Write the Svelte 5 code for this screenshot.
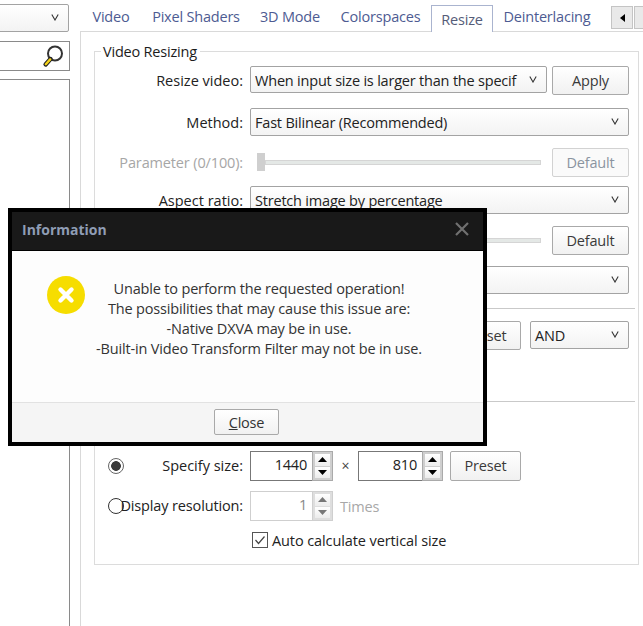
<script>
  const tabs = ['Video', 'Pixel Shaders', '3D Mode', 'Colorspaces', 'Resize', 'Deinterlacing'];
  const messages = [
    'Unable to perform the requested operation!',
    'The possibilities that may cause this issue are:',
    '-Native DXVA may be in use.',
    '-Built-in Video Transform Filter may not be in use.'
  ];
</script>

{#snippet chevron()}
  <svg class="chev" width="8" height="7" viewBox="0 0 8 7"><path d="M.8 .5 4 6 7.2 .5" fill="none" stroke="#333" stroke-width="1.1"/></svg>
{/snippet}

{#snippet spinner(disabled)}
  <div class="spin" class:off={disabled}>
    <span class="sb"><svg width="9" height="5" viewBox="0 0 9 5"><path d="M4.5 0 9 5H0z"/></svg></span>
    <span class="sb"><svg width="9" height="5" viewBox="0 0 9 5"><path d="M0 0h9L4.5 5z"/></svg></span>
  </div>
{/snippet}

<div class="page">
  <aside class="left">
    <div class="combo lc"><span></span>{@render chevron()}</div>
    <div class="search">
      <svg width="26" height="26" viewBox="0 0 26 26">
        <circle cx="13" cy="10.5" r="7" fill="#fff" stroke="#333" stroke-width="2"/>
        <path d="M8.5 16 3.6 21.4" stroke="#222" stroke-width="4.4" stroke-linecap="round"/>
        <path d="M8.2 16.4 3.8 21.2" stroke="#f3d21a" stroke-width="2.4" stroke-linecap="round"/>
      </svg>
    </div>
    <div class="list"></div>
  </aside>

  <main class="right">
    <div class="tabbar">
      <div class="tabs">
        {#each tabs as t}
          <div class="tab" class:active={t === 'Resize'}>{t}</div>
        {/each}
      </div>
      <div class="scrollbtns">
        <span class="sc"><svg width="5" height="8" viewBox="0 0 5 8"><path d="M5 0v8L0 4z"/></svg></span>
        <span class="sc"></span>
      </div>
    </div>

    <div class="panel">
      <section class="group">
        <div class="legend">Video Resizing</div>

        <div class="row r1">
          <label class="lb">Resize video:</label>
          <div class="combo grow"><span class="clip">When input size is larger than the specif</span>{@render chevron()}</div>
          <button class="btn apply">Apply</button>
        </div>

        <div class="row r2">
          <label class="lb">Method:</label>
          <div class="combo grow"><span>Fast Bilinear (Recommended)</span>{@render chevron()}</div>
        </div>

        <div class="row r3">
          <label class="lb dim">Parameter (0/100):</label>
          <div class="slider"><i class="thumb"></i></div>
          <button class="btn dflt" disabled>Default</button>
        </div>

        <div class="row r4">
          <label class="lb">Aspect ratio:</label>
          <div class="combo grow"><span>Stretch image by percentage</span>{@render chevron()}</div>
        </div>

        <div class="row r5">
          <label class="lb"></label>
          <div class="slider"></div>
          <button class="btn dflt">Default</button>
        </div>

        <div class="row r6">
          <label class="lb"></label>
          <div class="combo grow"><span></span>{@render chevron()}</div>
        </div>

        <hr class="sep s1" />

        <div class="row r7">
          <label class="lb"></label>
          <div class="grow"></div>
          <button class="btn preset">Preset</button>
          <div class="combo and"><span>AND</span>{@render chevron()}</div>
        </div>

        <hr class="sep s2" />

        <div class="row r8">
          <span class="radio on"></span>
          <label class="lb2">Specify size:</label>
          <div class="num"><span>1440</span></div>
          {@render spinner(false)}
          <span class="times">×</span>
          <div class="num wide"><span>810</span></div>
          {@render spinner(false)}
          <button class="btn preset2">Preset</button>
        </div>

        <div class="row r9">
          <span class="radio"></span>
          <label class="lb2 res">Display resolution:</label>
          <div class="num off"><span>1</span></div>
          {@render spinner(true)}
          <span class="timeslabel">Times</span>
        </div>

        <div class="row r10">
          <span class="check"><svg width="14" height="14" viewBox="0 0 14 14"><path d="M2.5 7 5.5 10.5 11.5 3.5" fill="none" stroke="#444" stroke-width="1.2"/></svg></span>
          <span class="autotext">Auto calculate vertical size</span>
        </div>
      </section>
    </div>
  </main>

  <div class="modal">
    <header class="mhead">
      <span class="mtitle">Information</span>
      <svg class="mx" width="14" height="14" viewBox="0 0 14 14"><path d="M1 1l12 12M13 1 1 13" stroke="#707070" stroke-width="2.2"/></svg>
    </header>
    <div class="mbody">
      <svg class="micon" width="38" height="38" viewBox="0 0 38 38">
        <circle cx="19" cy="19" r="19" fill="#f6dd00"/>
        <path d="M13.5 13.5l11 11M24.5 13.5l-11 11" stroke="#fff" stroke-width="4.4" stroke-linecap="round"/>
      </svg>
      <div class="mtext">
        {#each messages as m}<div>{m}</div>{/each}
      </div>
    </div>
    <footer class="mfoot">
      <button class="btn close"><u>C</u>lose</button>
    </footer>
  </div>
</div>

<style>
  :global(body) { margin: 0; background: #fff; }
  .page {
    position: relative;
    display: flex;
    width: 643px;
    height: 626px;
    overflow: hidden;
    background: #fff;
    color: #222;
    font: 14.5px/20px "Open Sans", "Noto Sans", sans-serif;
    letter-spacing: -0.2px;
  }
  .left { width: 70px; flex: none; display: flex; flex-direction: column; overflow: hidden; }
  .combo {
    box-sizing: border-box;
    display: flex;
    align-items: center;
    justify-content: space-between;
    height: 28px;
    border: 1px solid #a3a3a3;
    border-radius: 2px;
    background: linear-gradient(#fff, #f3f3f3);
    padding: 2px 9px 0 4px;
    min-width: 0;
    white-space: nowrap;
  }
  .chev { flex: none; margin-bottom: 3px; }
  .clip { overflow: hidden; width: 264px; }
  .lc { margin: 4px 1px 0 -6px; }
  .search {
    box-sizing: border-box;
    display: flex;
    justify-content: flex-end;
    align-items: center;
    height: 30px;
    margin: 9px 0 0 -6px;
    border: 1px solid #8a8a8a;
    padding-right: 1px;
  }
  .list {
    box-sizing: border-box;
    flex: 1;
    margin: 8px 0 0 -6px;
    border: 1px solid #8a8a8a;
    border-bottom: 0;
  }
  .right { margin-left: 10px; flex: 1; min-width: 0; display: flex; flex-direction: column; }
  .tabbar {
    position: relative;
    box-sizing: border-box;
    height: 32px;
    padding-top: 5px;
    border-bottom: 1px solid #d9d9d9;
    display: flex;
  }
  .tabs { display: grid; grid-template-columns: 62px 108px 80px 101px 62px 108px; }
  .tab {
    box-sizing: border-box;
    height: 26px;
    display: flex;
    align-items: center;
    justify-content: center;
    color: #4d5b92;
    padding-bottom: 3px;
  }
  .tab.active {
    height: 27px;
    background: #fff;
    border: 1px solid #aab4cf;
    border-bottom: 0;
    color: #555c78;
    padding: 1px 0 0;
  }
  .scrollbtns { display: flex; gap: 1px; margin: 1px 0 0 10px; }
  .sc {
    box-sizing: border-box;
    width: 22px;
    height: 23px;
    flex: none;
    display: flex;
    align-items: center;
    justify-content: center;
    background: #e9e9e9;
    border: 1px solid #c4c4c4;
  }
  .panel { flex: 1; border-left: 1px solid #d9d9d9; padding: 19px 0 0 13px; }
  .group {
    position: relative;
    box-sizing: border-box;
    width: 545px;
    height: 514px;
    border: 1px solid #dcdcdc;
  }
  .legend {
    position: absolute;
    left: 6px;
    top: -10px;
    background: #fff;
    padding: 0 3px 0 2px;
    color: #1c1c1c;
  }
  .row { display: flex; align-items: center; }
  .r1, .r2, .r3, .r4, .r5, .r6, .r7 { width: 534px; }
  .lb { flex: none; width: 148px; margin-right: 7px; text-align: right; white-space: nowrap; padding-top: 1px; letter-spacing: 0; }
  .lb.dim { color: #a6a6a6; letter-spacing: -0.14px; }
  .grow { flex: 1; min-width: 0; }
  .btn {
    box-sizing: border-box;
    border: 1px solid #a9a9a9;
    border-radius: 2px;
    background: linear-gradient(#fff, #f1f1f1);
    font: inherit;
    letter-spacing: inherit;
    color: #3a3a3a;
    padding: 0;
    height: 29px;
  }
  .btn:disabled { color: #8a94a0; border-color: #d2d2d2; background: #fafafa; }
  .apply, .dflt { width: 77px; flex: none; }
  .apply { margin-left: 5px; padding-top: 1px; }
  .r1 { margin-top: 14px; height: 29px; align-items: flex-start; }
  .r1 .combo { height: 27px; }
  .r1 .lb { line-height: 28px; padding-top: 1px; }
  .r2 { margin-top: 13px; }
  .r3 { margin-top: 12px; height: 29px; }
  .r4 { margin-top: 9px; }
  .r5 { margin-top: 12px; height: 29px; }
  .r6 { margin-top: 11px; }
  .slider {
    position: relative;
    box-sizing: border-box;
    width: 276px;
    height: 5px;
    flex: none;
    margin: 0 11px 0 15px;
    background: #e4e8e6;
    border: 1px solid #d5d5d5;
  }
  .thumb { position: absolute; left: -9px; top: -8px; width: 8px; height: 18px; background: #cfcfcf; }
  .sep { border: 0; height: 1px; background: #c9c9c9; margin: 0; width: 540px; }
  .s1 { margin-top: 14px; }
  .s2 { margin-top: 51px; }
  .r7 { margin-top: 12px; height: 29px; align-items: flex-start; }
  .preset { width: 71px; flex: none; margin-right: 9px; padding-top: 1px; }
  .and { width: 99px; flex: none; }
  .r8 { margin-top: 49px; height: 30px; }
  .r9 { margin-top: 10px; height: 30px; }
  .radio {
    box-sizing: border-box;
    flex: none;
    width: 16px;
    height: 16px;
    margin: 0 0 1px 13px;
    border: 1px solid #333;
    border-radius: 50%;
    background: #fff;
  }
  .radio.on {
    background: radial-gradient(circle, #3a3a3a 0 4.5px, #fff 5.2px);
    border-color: #666;
  }
  .lb2 {
    flex: none;
    width: 123px;
    margin: 0 7px 0 -4px;
    display: flex;
    justify-content: flex-end;
    white-space: nowrap;
    letter-spacing: 0;
  }
  .lb2.res { letter-spacing: -0.14px; }
  .num {
    box-sizing: border-box;
    width: 62px;
    height: 30px;
    flex: none;
    display: flex;
    align-items: center;
    justify-content: flex-end;
    padding: 0 5px 2px 0;
    border: 1px solid #777;
    border-right: 0;
  }
  .num.wide { width: 64px; }
  .num.off { border-color: #cfcfcf; color: #888; }
  .spin {
    box-sizing: border-box;
    width: 21px;
    height: 30px;
    flex: none;
    display: flex;
    flex-direction: column;
    gap: 1px;
    padding: 2px;
    background: #cfcfcf;
    border: 1px solid #aaa;
  }
  .spin.off { border-color: #cfcfcf; background: #dedede; }
  .spin.off path { fill: #777; }
  .sb {
    flex: 1;
    display: flex;
    align-items: center;
    justify-content: center;
    background: linear-gradient(#fff, #ececec);
  }
  .times { width: 25px; flex: none; text-align: center; color: #444; font-size: 14px; }
  .preset2 { width: 71px; flex: none; margin-left: 7px; height: 30px; }
  .timeslabel { margin-left: 7px; color: #a8a8a8; padding-top: 1px; }
  .r10 { margin: 11px 0 0 157px; height: 16px; }
  .autotext { padding-top: 2px; letter-spacing: -0.1px; }
  .check {
    box-sizing: border-box;
    width: 16px;
    height: 16px;
    flex: none;
    margin-right: 4px;
    border: 1px solid #555;
    background: #fff;
  }
  .check svg { display: block; }

  .modal {
    position: absolute;
    left: 8px;
    top: 208px;
    box-sizing: border-box;
    width: 479px;
    height: 238px;
    border: 4px solid #000;
    display: flex;
    flex-direction: column;
    background: #fff;
  }
  .mhead {
    box-sizing: border-box;
    height: 39px;
    flex: none;
    display: flex;
    align-items: center;
    justify-content: space-between;
    padding: 0 14px 2px 10px;
    background: #191919;
    border-bottom: 1px solid #000;
  }
  .mx { margin-bottom: 2px; }
  .mtitle { color: #8f9db5; font-weight: 700; font-size: 14px; letter-spacing: 0; }
  .mbody {
    flex: 1;
    display: flex;
    align-items: flex-start;
    padding: 25px 0 0 35px;
    background: #fdfdfd;
  }
  .micon { flex: none; }
  .mtext { margin: 3px 0 0 11px; width: 326px; text-align: center; color: #333; white-space: nowrap; letter-spacing: -0.17px; }
  .mfoot {
    box-sizing: border-box;
    height: 40px;
    flex: none;
    display: flex;
    justify-content: center;
    padding: 6px 2px 0 0;
    background: #f5f5f5;
    border-top: 1px solid #e2e2e2;
  }
  .close { width: 65px; height: 26px; color: #333; padding-top: 1px; }
</style>
